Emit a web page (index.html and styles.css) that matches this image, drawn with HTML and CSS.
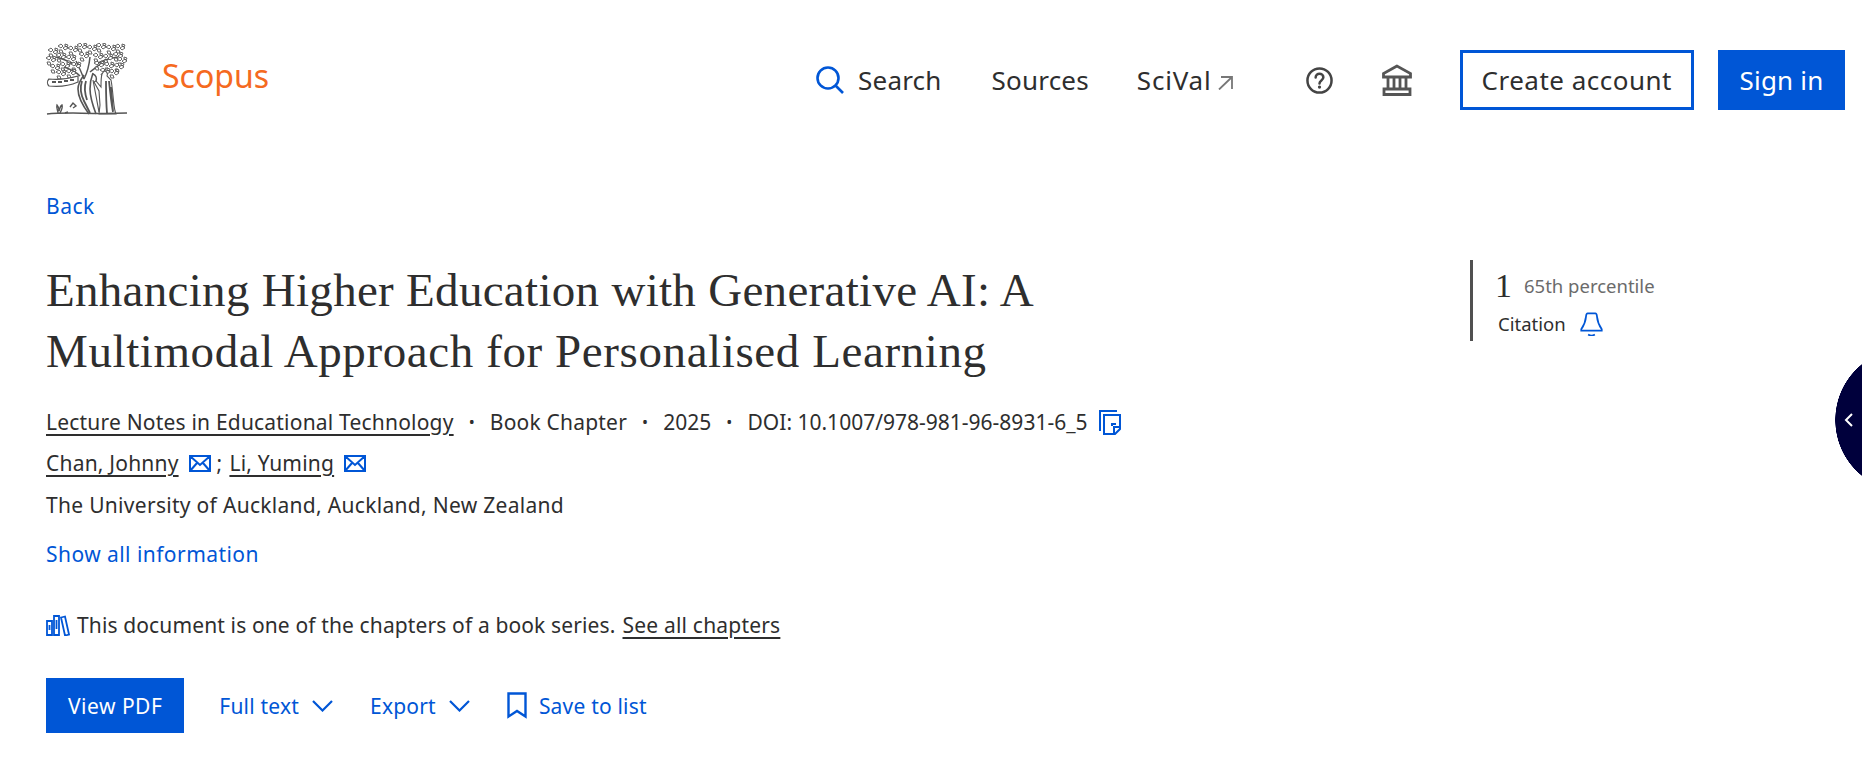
FILE: index.html
```html
<!DOCTYPE html>
<html>
<head>
    <title>Scopus - Document details</title>
    <link rel="stylesheet" href="styles.css">
</head>
<body>
    <header class="top-bar">
        <div class="brand">
            <svg class="tree-logo" viewBox="0 0 82 74" fill="none" stroke="#555" stroke-width="1">
                <defs>
                    <g id="leaves">
                        <path d="M0 2l3-2 2 2-2 2zM5 4l3-2 2 2-3 2zM1 6l3 0 1 3-3 0zM7 0l3 1-1 2-2-1z" fill="#fff" stroke-width=".9"/>
                    </g>
                </defs>
                <!-- foliage -->
                <path d="M44 14C43 24 41 30 38 36M30 18c3 6 5 10 8 18M60 16c-5 5-11 9-16 13M18 24c6 2 12 5 16 9M10 14c8 2 14 5 20 8M72 14c-8 1-14 3-20 6" stroke-width="1.500"/>
                <use href="#leaves" x="2" y="5"/><use href="#leaves" x="12" y="1"/><use href="#leaves" x="22" y="3"/>
                <use href="#leaves" x="31" y="0"/><use href="#leaves" x="41" y="2"/><use href="#leaves" x="50" y="0"/>
                <use href="#leaves" x="60" y="2"/><use href="#leaves" x="69" y="1"/><use href="#leaves" x="0" y="13"/>
                <use href="#leaves" x="10" y="10"/><use href="#leaves" x="20" y="12"/><use href="#leaves" x="33" y="9"/>
                <use href="#leaves" x="47" y="10"/><use href="#leaves" x="57" y="11"/><use href="#leaves" x="67" y="9"/>
                <use href="#leaves" x="71" y="14"/><use href="#leaves" x="4" y="21"/><use href="#leaves" x="14" y="19"/>
                <use href="#leaves" x="25" y="19"/><use href="#leaves" x="48" y="18"/><use href="#leaves" x="58" y="19"/>
                <use href="#leaves" x="68" y="20"/><use href="#leaves" x="10" y="27"/><use href="#leaves" x="20" y="26"/>
                <use href="#leaves" x="54" y="25"/><use href="#leaves" x="63" y="26"/>
                <!-- trunk -->
                <path d="M38 32c-3 4-6 8-6 14 0 9 5 17 11 25M47 30c-2 5-3 10-3 16 0 9 3 17 6 25" stroke-width="1.600"/>
                <path d="M36 38c-2 6-1 14 2 20M40 38c-2 6-1 13 1 19M38 58l6 12" stroke-width="1.800"/>
                <!-- scroll -->
                <path d="M3 36c9 1 19 0 29-3v6c-9 4-20 5-29 4-2-2-2-5 0-7z" fill="#fff" stroke-width="1.200"/>
                <path d="M6 39h4M12 39h4M18 38h4M24 37h4" stroke-width="2"/>
                <!-- figure -->
                <path d="M58 28c3 0 4 3 3 5l4 4c2 10 2 22 4 31l1 3H53l1-9-1-14-5-9 2-1 5 6c0-5 0-10 1-13z" fill="#fff" stroke-width="1.100"/>
                <path d="M63 38c1 10 2 20 4 31M60 38c0 10 0 21 1 32M65 44l2 24" stroke-width="1.800"/>
                <path d="M47 37l6 32" stroke-width="1.200"/>
                <path d="M47 31c3 1 4 4 3 7" stroke-width="1.400"/>
                <!-- ground -->
                <path d="M1 71c8-1 18-1 26-1s30 1 54 0" stroke-width="1.500"/>
                <path d="M12 70c0-3-2-5-1-8 2 2 2 4 2 6 1-3 1-5 3-6 1 3-1 6-2 8M24 64l3-4 3 3-3 2M19 70l3-1" stroke-width="1.400"/>
            </svg>
            <a class="scopus-name" href="#">Scopus</a>
        </div>
        <nav class="main-nav">
            <a class="nav-link" href="#">
                <svg class="search-icon" viewBox="0 0 28 28" fill="none" stroke="#0056d6" stroke-width="2.600"><circle cx="12" cy="12" r="10.500"/><path d="M19.500 19.500l7.500 7.500"/></svg>
                Search
            </a>
            <a class="nav-link" href="#">Sources</a>
            <a class="nav-link scival" href="#">SciVal<svg class="out-icon" viewBox="0 0 15 14" fill="none" stroke="#777" stroke-width="1.800"><path d="M1 13.500L14 1M3 1h11v12"/></svg></a>
        </nav>
        <div class="tool-icons">
            <svg class="help-icon" viewBox="0 0 28 28" fill="none" stroke="#444" stroke-width="2.600">
                <circle cx="14" cy="14" r="12.500"/>
                <path d="M10 11c0-2.600 2-4 4-4s4 1.400 4 3.600c0 3.400-4 3.200-4 6.400" stroke-linecap="round"/>
                <circle cx="14" cy="20.800" r="1.700" fill="#444" stroke="none"/>
            </svg>
            <svg class="inst-icon" viewBox="0 0 30 32" fill="none" stroke="#555" stroke-width="2.800">
                <path d="M15 2L1.500 9.500V13h27V9.500z"/>
                <path d="M6 13v12M12 13v12M18 13v12M24 13v12M2 25h26v5.500H2z"/>
            </svg>
        </div>
        <div class="account-btns">
            <a class="btn-outline" href="#">Create account</a>
            <a class="btn-solid" href="#">Sign in</a>
        </div>
    </header>

    <main class="doc-page">
        <a class="back-link" href="#">Back</a>
        <div class="doc-head">
            <div class="doc-main">
                <h1 class="doc-title">Enhancing Higher Education with Generative AI: A<br><span class="title-second">Multimodal Approach for Personalised Learning</span></h1>
                <div class="meta-row source-row">
                    <a class="dark-link" href="#">Lecture Notes in Educational Technology</a>
                    <span class="dot">•</span><span>Book Chapter</span>
                    <span class="dot">•</span><span class="tight">2025</span>
                    <span class="dot">•</span><span class="tight">DOI: 10.1007/978-981-96-8931-6_5</span>
                    <svg class="copy-icon" viewBox="0 0 22 25" fill="none" stroke="#0056d6" stroke-width="2"><path d="M1 21V1h17M5 5h16v14l-5 5H5zM15 23v-6h5"/><path d="M13 16v-2h4"/></svg>
                </div>
                <div class="meta-row authors">
                    <a class="dark-link" href="#">Chan, Johnny</a>
                    <svg class="mail-icon" viewBox="0 0 22 17" fill="none" stroke="#0056d6" stroke-width="2"><path d="M1 1h20v15H1zM1 1l10 9 10-9M1 16l7-8M21 16l-7-8"/></svg>
                    <span class="semi">;</span>
                    <a class="dark-link" href="#">Li, Yuming</a>
                    <svg class="mail-icon" viewBox="0 0 22 17" fill="none" stroke="#0056d6" stroke-width="2"><path d="M1 1h20v15H1zM1 1l10 9 10-9M1 16l7-8M21 16l-7-8"/></svg>
                </div>
                <div class="meta-row affiliation">The University of Auckland, Auckland, New Zealand</div>
                <a class="show-all" href="#">Show all information</a>
                <div class="series-note">
                    <svg class="books-icon" viewBox="0 0 24 21" fill="none" stroke="#0056d6" stroke-width="1.800"><path d="M1 6h5v14H1zM8 1h5v19H8zM15 2.500l4-1 4 18-4 1z"/><path d="M3.500 10v5M10.500 5v9"/></svg>
                    <span class="series-text">This document is one of the chapters of a book series.</span>
                    <a class="dark-link" href="#">See all chapters</a>
                </div>
                <div class="action-row">
                    <a class="btn-pdf" href="#">View PDF</a>
                    <a class="action-link" href="#">Full text<svg class="chev" viewBox="0 0 21 12" fill="none" stroke="#0056d6" stroke-width="2.200"><path d="M1 1l9.500 9.500L20 1"/></svg></a>
                    <a class="action-link" href="#">Export<svg class="chev" viewBox="0 0 21 12" fill="none" stroke="#0056d6" stroke-width="2.200"><path d="M1 1l9.500 9.500L20 1"/></svg></a>
                    <a class="action-link save-link" href="#"><svg class="mark" viewBox="0 0 20 27" fill="none" stroke="#0056d6" stroke-width="2.400"><path d="M1.500 1.500h17v23l-8.500-5.500-8.500 5.500z"/></svg>Save to list</a>
                </div>
            </div>
            <aside class="citation-box">
                <div class="cite-top"><span class="cite-num">1</span><span class="cite-pct">65th percentile</span></div>
                <div class="cite-bottom">Citation
                    <svg class="bell-icon" viewBox="0 0 24 25" fill="none" stroke="#0056d6" stroke-width="1.800"><path d="M8 1.500h8c1 0 1.500 1 1.700 3 .4 5 1.300 8 5 13.500v1.500H1.300V18c3.700-5.500 4.600-8.500 5-13.500.2-2 .7-3 1.700-3zM8.500 23.500c2 1.200 5 1.200 7 0"/></svg>
                </div>
            </aside>
        </div>
    </main>

    <button class="side-toggle"><svg class="side-chev" viewBox="0 0 10 14" fill="none" stroke="#fff" stroke-width="2"><path d="M8 1L2 7l6 6"/></svg></button>
</body>
</html>
```

FILE: styles.css
```css
* {
    box-sizing: border-box;
}
html, body {
    height: 100%;
}
body {
    margin: 0;
    background-color: #fff;
    color: #2e2e2e;
    font-family: "Noto Sans", "Open Sans", sans-serif;
    overflow: hidden;
    position: relative;
}
a {
    text-decoration: none;
}
svg {
    display: block;
    flex: none;
}
.top-bar {
    display: flex;
    align-items: center;
    height: 110px;
    padding: 50px 17px 0 46px;
}
.brand {
    display: flex;
    align-items: center;
    gap: 34px;
    margin-right: auto;
}
.tree-logo {
    width: 82px;
    height: 74px;
}
.scopus-name {
    color: #f56a1f;
    font-size: 32px;
    margin-top: -9px;
}
.main-nav {
    display: flex;
    align-items: center;
    gap: 50px;
}
.nav-link {
    display: flex;
    align-items: center;
    gap: 14px;
    color: #2e2e2e;
    font-size: 26px;
    letter-spacing: .2px;
}
.search-icon {
    width: 28px;
    height: 28px;
}
.scival {
    gap: 6px;
    margin-left: -2px;
    letter-spacing: .8px;
}
.out-icon {
    width: 15px;
    height: 14px;
    margin-top: 6px;
}
.tool-icons {
    display: flex;
    align-items: center;
    gap: 49px;
    margin-left: 73px;
    margin-right: 48px;
}
.help-icon {
    width: 27px;
    height: 27px;
}
.inst-icon {
    width: 30px;
    height: 32px;
}
.account-btns {
    display: flex;
    gap: 24px;
}
.btn-outline, .btn-solid {
    display: flex;
    align-items: center;
    height: 60px;
    font-size: 26px;
}
.btn-outline {
    padding: 0 19px;
    border: 3px solid #0056d6;
    color: #2e2e2e;
    letter-spacing: .5px;
}
.btn-solid {
    padding: 0 21.500px;
    background-color: #0056d6;
    color: #fff;
    letter-spacing: .2px;
}
.doc-page {
    padding: 82px 0 0 46px;
}
.back-link {
    display: block;
    color: #0056d6;
    font-size: 21px;
    line-height: 28px;
    letter-spacing: .5px;
}
.doc-head {
    display: flex;
    margin-top: 40px;
}
.doc-main {
    width: 1424px;
}
.doc-title {
    margin: 0;
    font-family: "Liberation Serif", serif;
    font-size: 47px;
    font-weight: 400;
    line-height: 61px;
    letter-spacing: .3px;
    color: #2e2e2e;
}
.title-second {
    letter-spacing: .6px;
}
.meta-row {
    display: flex;
    align-items: center;
    height: 42px;
    font-size: 21px;
    letter-spacing: .2px;
    color: #2e2e2e;
}
.source-row {
    margin-top: 19px;
}
.authors {
    margin-top: -1px;
}
.affiliation {
    letter-spacing: .3px;
}
.tight {
    letter-spacing: 0;
}
.dark-link {
    color: #2e2e2e;
    text-decoration: underline;
    text-underline-offset: 4px;
    text-decoration-thickness: 2px;
}
.dot {
    margin: 0 15px;
    font-size: 16px;
}
.copy-icon {
    width: 22px;
    height: 25px;
    margin-left: 11px;
}
.mail-icon {
    width: 22px;
    height: 17px;
    margin-left: 10px;
    margin-right: 6px;
}
.semi {
    margin-right: 7px;
}
.show-all {
    display: block;
    color: #0056d6;
    font-size: 21px;
    line-height: 28px;
    letter-spacing: .45px;
    margin-top: 14px;
}
.series-note {
    display: flex;
    align-items: center;
    gap: 7px;
    margin-top: 43px;
    font-size: 21px;
    letter-spacing: .2px;
    line-height: 28px;
}
.series-text {
    letter-spacing: .13px;
}
.books-icon {
    width: 24px;
    height: 21px;
}
.action-row {
    display: flex;
    align-items: center;
    gap: 37px;
    margin-top: 39px;
}
.btn-pdf {
    display: flex;
    align-items: center;
    height: 55px;
    padding: 0 22px;
    margin-right: -2px;
    background-color: #0056d6;
    color: #fff;
    font-size: 21px;
    letter-spacing: .5px;
}
.action-link {
    display: flex;
    align-items: center;
    gap: 13px;
    color: #0056d6;
    font-size: 21px;
    letter-spacing: .2px;
}
.save-link {
    gap: 12px;
}
.chev {
    width: 21px;
    height: 12px;
}
.mark {
    width: 20px;
    height: 27px;
}
.citation-box {
    display: flex;
    flex-direction: column;
    justify-content: center;
    width: 240px;
    height: 81px;
    padding-left: 25px;
    border-left: 3px solid #505050;
}
.cite-top {
    display: flex;
    align-items: center;
    gap: 12px;
}
.cite-num {
    font-family: "Liberation Serif", serif;
    font-size: 34px;
    line-height: 41px;
    margin-left: -3px;
}
.cite-pct {
    color: #6b6b6b;
    font-size: 18.500px;
}
.cite-bottom {
    display: flex;
    align-items: center;
    gap: 14px;
    font-size: 18.500px;
    margin-top: 5px;
}
.bell-icon {
    width: 23px;
    height: 24px;
}
/* only the left bulge of the round panel is inside the window */
.side-toggle {
    position: absolute;
    right: 0;
    top: 348px;
    width: 27px;
    height: 144px;
    border: none;
    background: radial-gradient(circle at 72px 72px, #00003c 71.500px, transparent 72px);
    padding: 0 0 0 9px;
    display: flex;
    align-items: center;
}
.side-chev {
    width: 10px;
    height: 14px;
}
```
